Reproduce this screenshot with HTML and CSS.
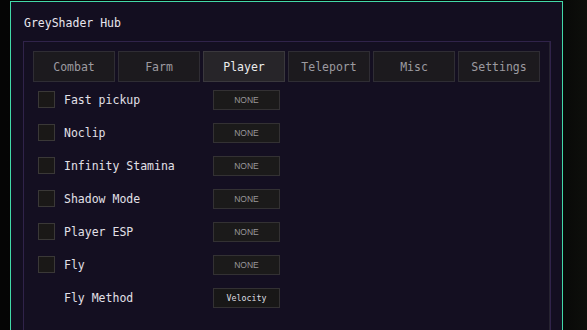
FILE: index.html
```html
<!DOCTYPE html>
<html lang="en">
<head>
  <meta charset="UTF-8">
  <meta name="viewport" content="width=device-width, initial-scale=1.0">
  <title>GreyShader Hub</title>
  <link rel="stylesheet" href="styles.css">
</head>
<body>
  <div class="window">
    <div class="title">GreyShader Hub</div>
    <div class="panel">
      <div class="tabs">
        <div class="tab">Combat</div>
        <div class="tab">Farm</div>
        <div class="tab active">Player</div>
        <div class="tab">Teleport</div>
        <div class="tab">Misc</div>
        <div class="tab">Settings</div>
      </div>
      <div class="rows">
        <div class="row"><span class="check"></span><span class="label">Fast pickup</span><span class="bind">NONE</span></div>
        <div class="row"><span class="check"></span><span class="label">Noclip</span><span class="bind">NONE</span></div>
        <div class="row"><span class="check"></span><span class="label">Infinity Stamina</span><span class="bind">NONE</span></div>
        <div class="row"><span class="check"></span><span class="label">Shadow Mode</span><span class="bind">NONE</span></div>
        <div class="row"><span class="check"></span><span class="label">Player ESP</span><span class="bind">NONE</span></div>
        <div class="row"><span class="check"></span><span class="label">Fly</span><span class="bind">NONE</span></div>
        <div class="row"><span class="blank"></span><span class="label">Fly Method</span><span class="bind select">Velocity</span></div>
      </div>
    </div>
  </div>
</body>
</html>
```

FILE: styles.css
```css
body {
  margin: 0;
  padding: 0;
  height: 330px;
  overflow: hidden;
  background: linear-gradient(90deg, #050505 0%, #060606 94%, #0d0f0b 100%);
  font-family: "DejaVu Sans Mono", monospace;
  font-size: 11.5px;
  color: #e2e0e8;
}

.window {
  box-sizing: border-box;
  width: 553px;
  height: 340px;
  margin: 1px 0 0 10px;
  padding: 14px 12px 0 12px;
  background-color: #130e20;
  border: 1px solid #42d8a8;
}

.title {
  padding-left: 1px;
  line-height: 14px;
  height: 14px;
  color: #e8e6ee;
}

.panel {
  box-sizing: border-box;
  width: 528px;
  height: 300px;
  margin-top: 11px;
  padding: 9px 9px 0 9px;
  background-color: #140f21;
  border: 1px solid #30234a;
  box-shadow: inset -5px 0 0 -4px #262330;
}

.tabs {
  display: grid;
  grid-template-columns: repeat(6, 82px);
  gap: 3px;
}

.tab {
  box-sizing: border-box;
  height: 31px;
  line-height: 30px;
  text-align: center;
  background-color: #1c1a1e;
  border: 1px solid #2f2d34;
  color: #9c9aa0;
}

.tab.active {
  background-color: #272529;
  border-color: #3a383d;
  color: #ececec;
}

.rows {
  margin-top: 1px;
  padding-left: 5px;
}

.row {
  display: flex;
  align-items: center;
  height: 33px;
}

.check, .blank {
  box-sizing: border-box;
  width: 17px;
  height: 17px;
  margin-right: 9px;
}

.check {
  background-color: #1a1817;
  border: 1px solid #3a3837;
}

.label {
  width: 149px;
}

.bind {
  box-sizing: border-box;
  width: 67px;
  height: 20px;
  line-height: 18px;
  text-align: center;
  background-color: #1b1a1a;
  border: 1px solid #333133;
  font-family: "Liberation Sans", Arial, sans-serif;
  font-size: 8.5px;
  color: #999799;
}

.bind.select {
  font-family: "DejaVu Sans Mono", monospace;
  font-size: 8.3px;
  font-weight: 300;
  color: #dcdbe0;
  background-color: #181717;
}
```
